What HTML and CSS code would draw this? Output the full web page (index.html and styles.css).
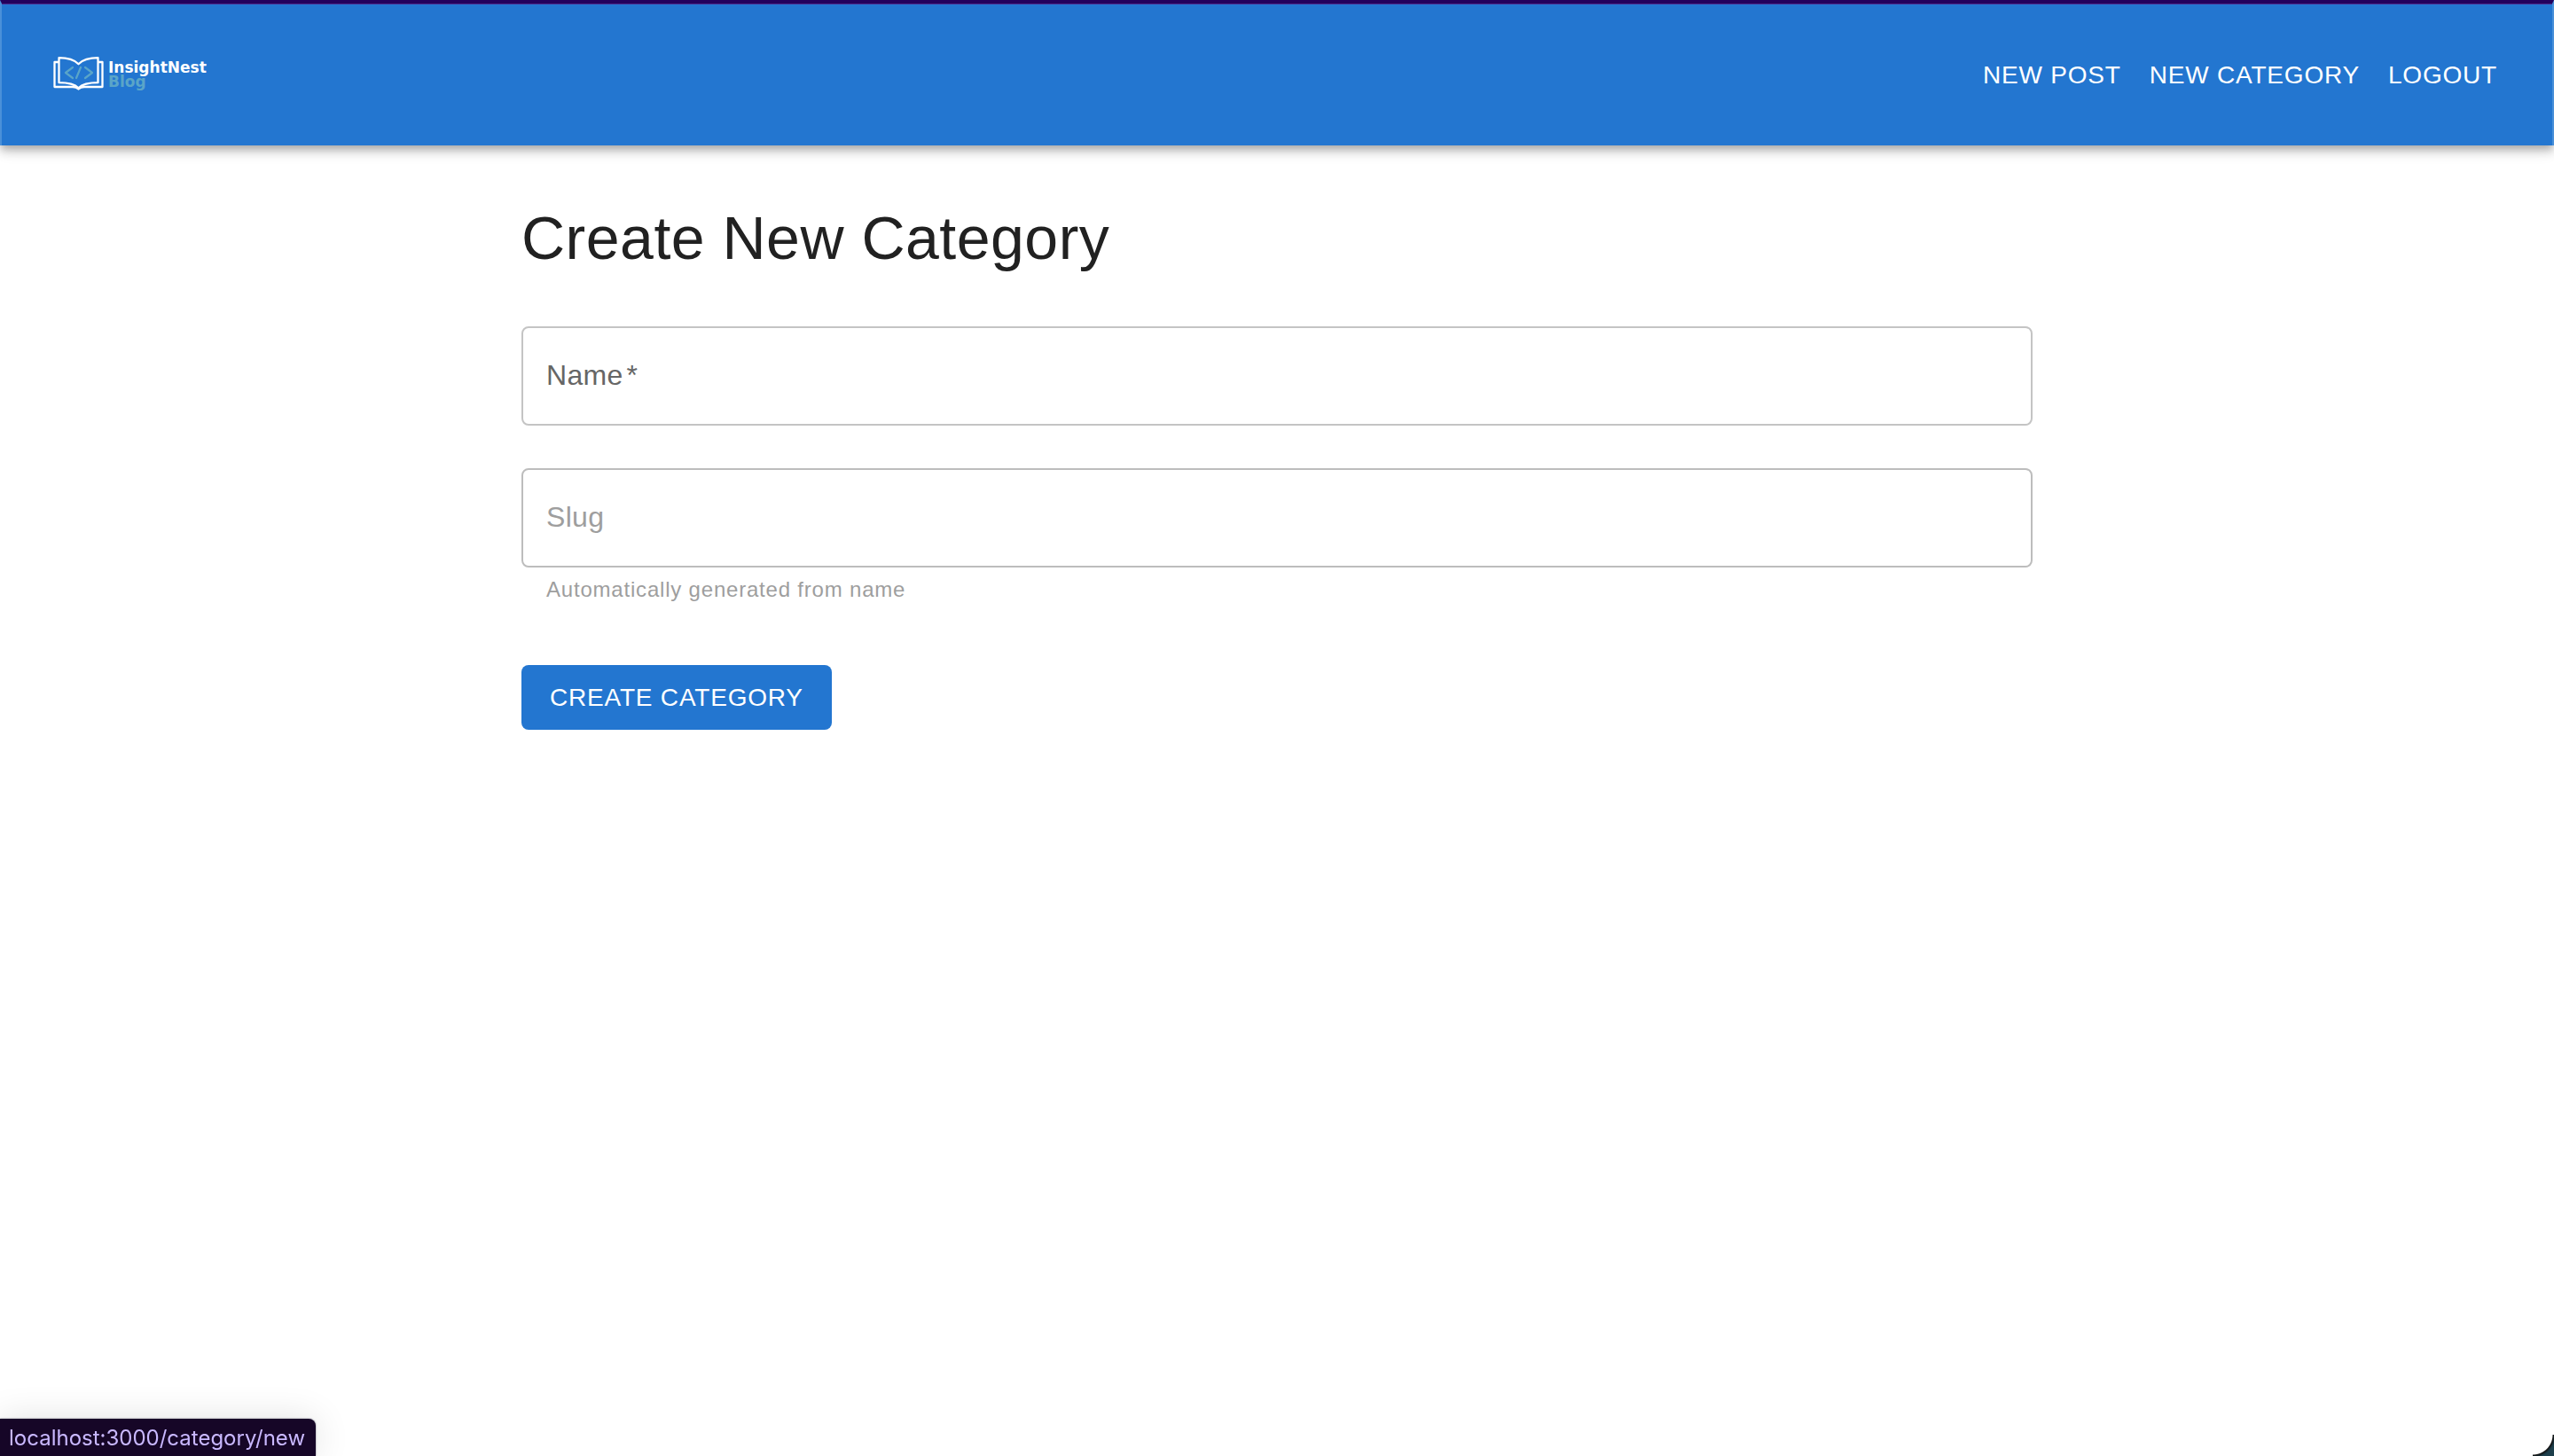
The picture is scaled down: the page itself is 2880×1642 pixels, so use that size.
FILE: index.html
```html
<!DOCTYPE html>
<html lang="en">
<head>
<meta charset="utf-8">
<meta name="viewport" content="width=device-width, initial-scale=1">
<title>Create New Category</title>
<link rel="stylesheet" href="styles.css">
</head>
<body>
<header class="app-bar">
  <a class="brand" href="#" aria-label="InsightNest Blog">
    <svg class="brand-icon" viewBox="0 0 58 40" aria-hidden="true">
      <g fill="none" stroke="#fff" stroke-width="2.3" stroke-linejoin="round" stroke-linecap="round">
        <path d="M6 6H1.5v28H22q4 0 6.500 2.500q2.500-2.500 6.500-2.500h20.500V6H51"/>
        <path d="M6.500 1.200q15 0 22 7q7-7 22-7v28q-16 0-22 6q-6-6-22-6z"/>
      </g>
      <path d="M22 12l-8 6 8 6M31 12l-5 12M36 12l8 6-8 6" fill="none" stroke="#5aa5c8" stroke-width="2.200" stroke-linecap="round" stroke-linejoin="round"/>
    </svg>
    <span class="brand-name">InsightNest<span class="brand-sub">Blog</span></span>
  </a>
  <nav class="nav">
    <a class="nav-link" href="#">NEW POST</a>
    <a class="nav-link" href="#">NEW CATEGORY</a>
    <button class="nav-link" type="button">LOGOUT</button>
  </nav>
</header>
<main class="container">
  <h1 class="title">Create New Category</h1>
  <form class="form">
    <div class="field">
      <label class="field-label" for="name">Name<span class="required">*</span></label>
      <input class="field-input" id="name" type="text" required>
    </div>
    <div class="field field-disabled">
      <label class="field-label" for="slug">Slug</label>
      <input class="field-input" id="slug" type="text" aria-describedby="slug-help" disabled>
    </div>
    <p class="helper" id="slug-help">Automatically generated from name</p>
    <button class="submit" type="submit">CREATE CATEGORY</button>
  </form>
</main>
<div class="status">localhost:3000/category/new</div>
<div class="corner"></div>
</body>
</html>
```
FILE: styles.css
```css
* { box-sizing: border-box; }
body {
  margin: 0;
  min-height: 100vh;
  background: #fff;
  color: #212121;
  font-family: "Liberation Sans", Arial, sans-serif;
}
.app-bar {
  display: flex;
  align-items: center;
  justify-content: space-between;
  height: 164px;
  padding: 0 46px 0 58px;
  border: 2px solid #4a90d9;
  border-top: 4px solid #23005c;
  border-bottom: 0;
  background: #2376d0;
  box-shadow: 0 4px 8px -2px rgba(0,0,0,.2), 0 8px 10px rgba(0,0,0,.14), 0 2px 20px rgba(0,0,0,.12), inset 0 1px #4b2a8c;
}
.brand { display: flex; align-items: center; gap: 4px; color: #fff; text-decoration: none; }
.brand-icon { width: 58px; height: 40px; }
.brand-name {
  display: flex;
  flex-direction: column;
  font: 700 17px/16px "DejaVu Sans", sans-serif;
}
.brand-sub { color: #5aa5c8; }
.nav { display: flex; }
.nav-link, .submit {
  border: 0;
  background: none;
  color: #fff;
  font: 28px/49px "Liberation Sans", Arial, sans-serif;
  letter-spacing: .02857em;
  text-decoration: none;
  cursor: pointer;
}
.nav-link { padding: 12px 16px; }
.container { max-width: 1800px; margin: 0 auto; padding: 62px 48px 0; }
.title { margin: 0 0 58px; font-size: 68px; font-weight: 400; line-height: 84px; letter-spacing: .00735em; }
.form { display: flex; flex-direction: column; align-items: stretch; }
.field { position: relative; margin-bottom: 48px; }
.field-label {
  position: absolute;
  inset: 0 auto 0 28px;
  display: flex;
  align-items: center;
  padding-bottom: 2px;
  color: #666;
  font-size: 32px;
  letter-spacing: .00938em;
  pointer-events: none;
}
.required { margin-left: 4px; }
.field-input {
  display: block;
  width: 100%;
  height: 112px;
  padding: 0 28px;
  border: 2px solid #c4c4c4;
  border-radius: 8px;
  background: #fff;
  font: 32px "Liberation Sans", Arial, sans-serif;
}
.field-disabled { margin-bottom: 5px; }
.field-disabled .field-label { color: #9e9e9e; }
.field-disabled .field-input { border-color: #bdbdbd; }
.helper { margin: 0 28px 65px; color: #9e9e9e; font-size: 24px; line-height: 40px; letter-spacing: .03333em; }
.submit { align-self: flex-start; padding: 12px 32px; border-radius: 8px; background: #2376d0; }
.status {
  position: fixed;
  left: 0;
  bottom: 0;
  padding: 2px 12px 0 10px;
  border-top-right-radius: 8px;
  background: #160627;
  color: #c9b8ff;
  font: 24px/40px Inter, sans-serif;
  box-shadow: 0 0 2px #667, 0 0 40px rgba(0,0,0,.12);
}
.corner {
  position: fixed;
  right: 0;
  bottom: 0;
  width: 24px;
  height: 24px;
  background: radial-gradient(circle at 0 0, transparent 22px, #111 23px, #1d3f4c 26px);
}
```
